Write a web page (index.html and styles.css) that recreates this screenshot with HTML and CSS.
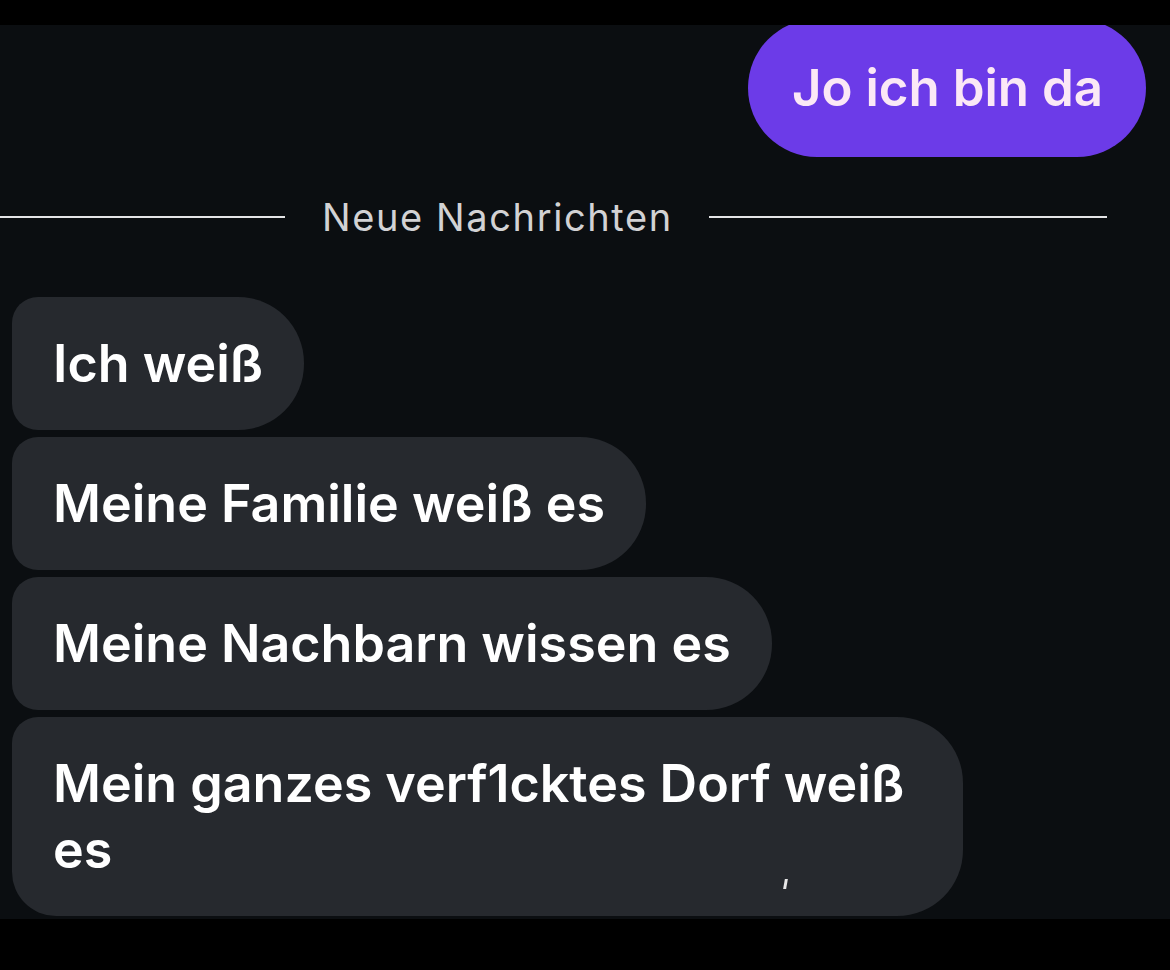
FILE: index.html
```html
<!DOCTYPE html>
<html lang="de">
<head>
    <meta charset="UTF-8">
    <meta name="viewport" content="width=device-width, initial-scale=1.0">
    <title>Chat</title>
    <link rel="stylesheet" href="styles.css">
</head>
<body>

   <div class="top-bar"></div>

   <div class="chat">
        <div class="row-out">
            <div class="bubble-out">Jo ich bin da</div>
        </div>

        <div class="divider">
            <span class="line line-left"></span>
            <span class="divider-text">Neue Nachrichten</span>
            <span class="line line-right"></span>
        </div>

        <div class="group-in">
            <div class="bubble-in">Ich weiß</div>
            <div class="bubble-in">Meine Familie weiß es</div>
            <div class="bubble-in">Meine Nachbarn wissen es</div>
            <div class="bubble-in last">Mein ganzes verf1cktes Dorf weiß es<span class="tick"></span></div>
        </div>
   </div>

   <div class="bottom-bar"></div>

</body>
</html>
```

FILE: styles.css
```css
*{
    margin: 0;
    padding: 0;
    box-sizing: border-box;
    font-family: Inter, Roboto, "Liberation Sans", Arial, sans-serif;
}
body{
    width: 1170px;
    height: 970px;
    background-color: #000;
    overflow: hidden;
}
.top-bar{
    height: 25px;
    background-color: #000;
}
.bottom-bar{
    height: 51px;
    background-color: #000;
}
.chat{
    height: 894px;
    background-color: #0b0e11;
    overflow: hidden;
}
.row-out{
    display: flex;
    justify-content: flex-end;
    padding-right: 24px;
    margin-top: -6px;
}
.bubble-out{
    background-color: #6c3be8;
    color: #fbe8f6;
    font-size: 51px;
    font-weight: 600;
    line-height: 66px;
    padding: 36px 43px 36px 44px;
    border-radius: 70px;
}
.divider{
    display: flex;
    align-items: center;
    width: 1107px;
    margin-top: 26px;
    height: 68px;
}
.line{
    height: 2px;
    background-color: #e4e4e6;
}
.line-left{
    flex: 0 0 285px;
}
.line-right{
    flex: 1;
}
.divider-text{
    color: #d2d2d4;
    font-size: 38px;
    letter-spacing: 1.6px;
    padding: 0 36px 0 37px;
}
.group-in{
    display: flex;
    flex-direction: column;
    align-items: flex-start;
    gap: 7px;
    padding-left: 12px;
    margin-top: 46px;
}
.bubble-in{
    position: relative;
    background-color: #26292e;
    color: #fff;
    font-size: 52px;
    font-weight: 600;
    line-height: 66px;
    padding: 34px 41px 33px 41px;
    max-width: 951px;
    border-radius: 26px 66px 66px 26px;
}
.bubble-in.last{
    border-radius: 26px 66px 66px 44px;
}
.tick{
    position: absolute;
    left: 772px;
    top: 162px;
    width: 3px;
    height: 10px;
    background-color: #e8e8e8;
    transform: skewX(-10deg);
}
```
